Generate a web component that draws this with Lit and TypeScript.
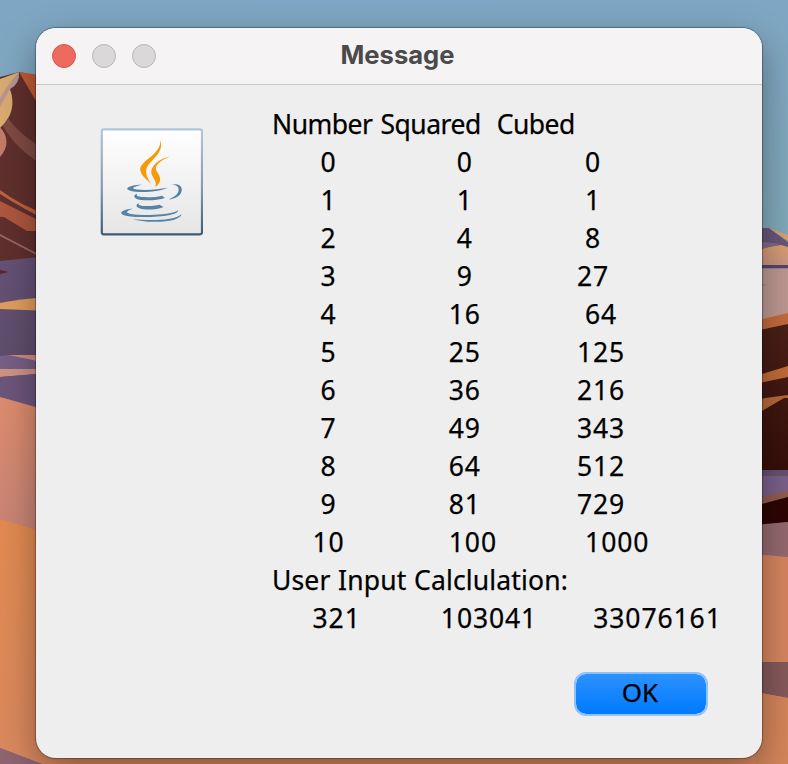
import { LitElement, html, css, svg } from "lit";
import { customElement } from "lit/decorators.js";

const sp = (n: number) => " ".repeat(n);
// Each row: leading gaps (in spaces) and the value that follows.
const rows: [number, string, number, string, number, string][] = [
  [6, "0", 15, "0", 14, "0"],
  [6, "1", 15, "1", 14, "1"],
  [6, "2", 15, "4", 14, "8"],
  [6, "3", 15, "9", 13, "27"],
  [6, "4", 14, "16", 13, "64"],
  [6, "5", 14, "25", 12, "125"],
  [6, "6", 14, "36", 12, "216"],
  [6, "7", 14, "49", 12, "343"],
  [6, "8", 14, "64", 12, "512"],
  [6, "9", 14, "81", 12, "729"],
  [5, "10", 13, "100", 11, "1000"],
];
const line = (r: [number, string, number, string, number, string]) =>
  sp(r[0]) + r[1] + sp(r[2]) + r[3] + sp(r[4]) + r[5];

const p = (fill: string, d: string) => svg`<path fill=${fill} d=${d}></path>`;

@customElement("desert-wallpaper")
class DesertWallpaper extends LitElement {
  static styles = css`
    :host, svg { display: block; width: 788px; height: 764px; }
  `;
  render() {
    return html`<svg viewBox="0 0 788 764">
      <defs>
        <linearGradient id="sky" x2="0" y2="1"><stop offset="0" stop-color="#7fa6c3"/><stop offset=".32" stop-color="#81a9b8"/></linearGradient>
        <linearGradient id="pink" x2="0" y2="1"><stop stop-color="#dd8c6c"/><stop offset="1" stop-color="#c78377"/></linearGradient>
        <linearGradient id="sand" x2="0" y2="1"><stop stop-color="#e28a50"/><stop offset="1" stop-color="#da895f"/></linearGradient>
        <linearGradient id="dark" x2="0" y2="1"><stop stop-color="#4a2018"/><stop offset="1" stop-color="#2f0704"/></linearGradient>
        <linearGradient id="plum" x2="0" y2="1"><stop stop-color="#655276"/><stop offset="1" stop-color="#5c4a66"/></linearGradient>
        <linearGradient id="peak" x2="0" y2="1"><stop stop-color="#d9a06c"/><stop offset="1" stop-color="#c99384"/></linearGradient>
      </defs>
      <rect width="788" height="764" fill="url(#sky)"/>
      ${p("#5f302d", "M0 77L19 72L60 80V280H0z")}
      ${p("#c25b35", "M19 72L60 78V130L36 101z")}
      ${p("#d9ab70", "M0 79L19 72L10 89Q18 112 0 128z")}
      ${p("#b89590", "M0 98Q8 84 19 72Q20 84 10 89L0 107z")}
      ${p("#7f4a43", "M8 118Q18 134 50 153V170Q16 150 3 126z")}
      ${p("#c27b68", "M0 127Q13 142 0 157z")}
      ${p("#bd6140", "M0 190Q18 204 50 216V222Q20 207 0 194z")}
      ${p("#ad573e", "M0 201L50 226V231H27L4 217H0z")}
      ${p("#98666d", "M0 234L50 260V262L0 236z")}
      ${p("url(#plum)", "M0 261L50 256V410H0z")}
      ${p("#5e2530", "M0 270L9 272L0 274z")}
      ${p("#df9e60", "M0 303Q18 299 50 297V311L0 309z")}
      ${p("#785f85", "M0 356L9 355L50 361V369H0z")}
      ${p("#c98f82", "M8 355H50V364Q25 358 8 355z")}
      ${p("#cf9385", "M0 369H50V373L0 377z")}
      ${p("#6c557a", "M0 377L50 373V410H0z")}
      ${p("url(#pink)", "M0 397L50 411V536H0z")}
      ${p("url(#sand)", "M0 519L50 534V740H788V764H0z")}
      ${p("#8d6570", "M0 748L42 764H0z")}
      ${p("#8d6570", "M0 748V764H42z")}
      ${p("#685579", "M750 228L769 228L788 242V260H750z")}
      ${p("#d9a06c", "M769 228L788 235V241z")}
      ${p("url(#peak)", "M750 250L781 245L788 247V266H750z")}
      ${p("#806b87", "M755 241L781 244L755 251z")}
      ${p("#55456f", "M755 265H788V268.5H755z")}
      ${p("#bd9891", "M755 268.5H788V324H755z")}
      ${p("#826a85", "M755 284L767 285L755 286z")}
      ${p("#c36b3b", "M755 321L788 313V325L755 332z")}
      ${p("url(#dark)", "M755 331L788 324V500L755 530z")}
      ${p("#bf6c39", "M755 376L788 366V377L755 384z")}
      ${p("#b66a38", "M755 401L765 398L788 395V398H784L755 415z")}
      ${p("#665073", "M755 470H788V530H755z")}
      ${p("#7a6088", "M755 476H788V496H755z")}
      ${p("#925c4c", "M755 498L788 491V497L755 506z")}
      ${p("#2d0503", "M755 506L788 497V522L755 526z")}
      ${p("#94696f", "M755 525L788 522V560H755z")}
      ${p("#d5855f", "M755 554L788 557V764H755z")}
      ${p("#85595a", "M755 662H788V698L755 692z")}
      ${p("#d4855a", "M755 692L788 698V764H755z")}
    </svg>`;
  }
}

@customElement("java-icon")
class JavaIcon extends LitElement {
  static styles = css`:host, svg { display: block; width: 103px; height: 108px; }`;
  render() {
    return html`<svg viewBox="100 128 103 108">
      <defs>
        <linearGradient id="face" x2="0" y2="1"><stop stop-color="#fff"/><stop offset="1" stop-color="#e5e5e5"/></linearGradient>
        <linearGradient id="edge" x2="0" y2="1"><stop stop-color="#b1c6dc"/><stop offset=".55" stop-color="#819cb4"/><stop offset="1" stop-color="#3d5a75"/></linearGradient>
      </defs>
      <rect x="101.8" y="129.3" width="100.2" height="105" rx="2" fill="url(#face)" stroke="url(#edge)" stroke-width="2.2"/>
      ${p("#f39b08", "M160.1 140C164 151 155 157 149 164C144 170 146 177 151.5 184C145 179 139.8 173 140.2 169C141 160 162 154 160.1 140z")}
      ${p("#f39b08", "M170 156.4C159 161 154 166 156.5 171C159 175 164 181 155.2 187C158 180 150.5 177 151.3 171C152.5 164 160 158.5 170 156.4z")}
      ${p("#5782a4", "M142 184.8C133 187 130 188.5 137 189.6C147 190.8 159 189.2 168 187.7C159 191.5 146 192.5 136 191.7C121 190.5 127 185 142 184.8z")}
      ${p("#5782a4", "M171 184.8C177 183 182 185 181.8 190C181.3 196 175 199 168.8 199.4C175 196.5 179 193.5 178.6 189.2C178.3 185.3 174.5 184.6 171 184.8z")}
      ${p("#5782a4", "M137.5 193.6C135.6 195.6 137 196.7 142 197.1C150 197.6 157 196.9 162 195.7L165 197.9C158 200.2 149 200.8 141 200C133 199 132.5 195.2 137.5 193.6z")}
      ${p("#5782a4", "M139 203C137.8 204.6 139.5 205.5 143 205.9C149 206.4 155 205.7 159.5 204.7L163.5 207C157 209.7 149 210.2 142 209C135.7 207.7 135 204.8 139 203z")}
      ${p("#5782a4", "M133 208.8C126 211 125 213 131 213.9C144 216 164 214.8 173 212.5C177 211.4 178 210.7 176.7 209.6C179.5 211.3 177 213.6 170 215C157 217.5 138 217.7 127 215.9C115 213.8 124 208.8 133 208.8z")}
      ${p("#5782a4", "M132.5 219C148 220.8 175 221 181.5 213.9C181 219 170 221.2 160 221.7C149 222.2 139 221.2 132.5 219z")}
    </svg>`;
  }
}

@customElement("app-root")
class AppRoot extends LitElement {
  static styles = css`
    :host { display: grid; width: 788px; height: 764px; overflow: hidden; }
    desert-wallpaper, .desk { grid-area: 1 / 1; }
    .desk { padding: 28px 26px 6px 36px; box-sizing: border-box; display: flex; z-index: 1; }
    .window {
      flex: 1; display: flex; flex-direction: column; border-radius: 20px; overflow: hidden;
      background: #eee; box-shadow: 0 0 1px 1px rgba(0,0,0,.3), 0 14px 36px rgba(0,0,0,.36);
    }
    .bar {
      height: 57px; box-sizing: border-box; border-bottom: 1px solid #c9c7c8; background: #f5f3f4;
      display: grid; grid-template-columns: 1fr auto 1fr; align-items: center;
    }
    .lights { display: flex; gap: 16px; padding-left: 16px; }
    .light { width: 24px; height: 24px; border-radius: 50%; box-sizing: border-box; background: #dad8d9; border: 1px solid #b9b7b8; }
    .close { background: #ed6a5e; border-color: #d85549; }
    .title { font: 700 25.6px/30px Inter, "Liberation Sans", sans-serif; color: #4b4a4b; margin: -3px 3px 0 0; }
    .body { flex: 1; display: flex; padding: 20px 0 0 64px; }
    java-icon { margin: 23px 69px 0 0; flex: none; }
    .main { flex: 1; display: flex; flex-direction: column; }
    .text { color: #000; font: 26.5px/38px "Noto Sans", sans-serif; white-space: pre; -webkit-text-stroke: .25px #000; }
    .row { letter-spacing: .9px; word-spacing: .22px; padding-left: .5px; }
    .head { letter-spacing: -.5px; word-spacing: 1.6px; }
    .note { letter-spacing: .15px; word-spacing: .5px; }
    .ok {
      align-self: flex-end; margin: 35px 54px 0 0; width: 134px; height: 44px; box-sizing: border-box;
      border: 2px solid #8fc2f8; border-radius: 12px; padding: 0 2px 4px 0; cursor: pointer;
      background: linear-gradient(#2c92ff, #007aff) padding-box;
      font: 26px/36px "Noto Sans", sans-serif; color: #000; -webkit-text-stroke: .25px #000;
    }
  `;
  render() {
    return html`
      <desert-wallpaper></desert-wallpaper>
      <div class="desk">
        <div class="window">
          <div class="bar">
            <div class="lights"><div class="light close"></div><div class="light"></div><div class="light"></div></div>
            <div class="title">Message</div>
          </div>
          <div class="body">
            <java-icon></java-icon>
            <div class="main">
              <div class="text head">${"Number Squared" + sp(2) + "Cubed"}</div>
              ${rows.map((r) => html`<div class="text row">${line(r)}</div>`)}
              <div class="text note">User Input Calclulation:</div>
              <div class="text row">${line([5, "321", 10, "103041", 7, "33076161"])}</div>
              <button class="ok">OK</button>
            </div>
          </div>
        </div>
      </div>`;
  }
}
